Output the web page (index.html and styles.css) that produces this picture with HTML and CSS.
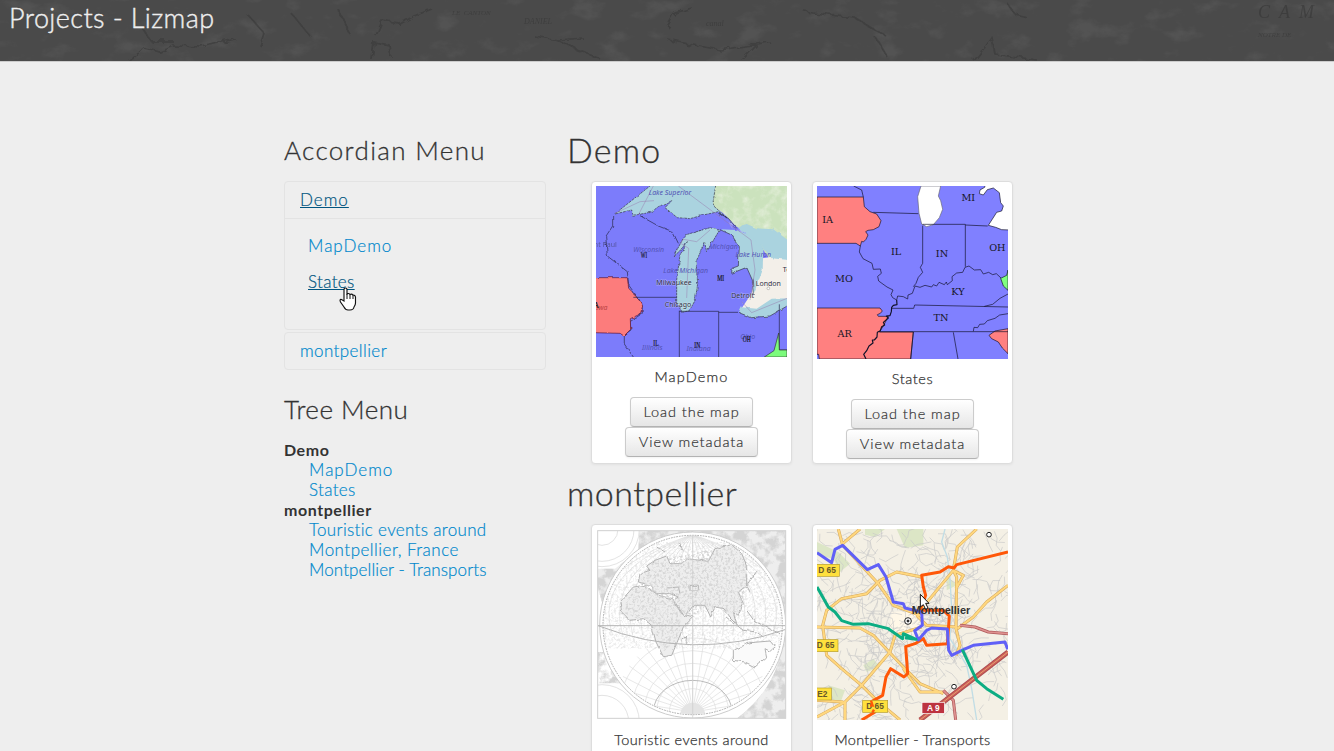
FILE: index.html
```html
<!DOCTYPE html>
<html lang="en">
<head>
<meta charset="utf-8">
<title>Projects - Lizmap</title>
<link rel="stylesheet" href="styles.css">
</head>
<body>
<header class="header">
  <svg class="header-art" viewBox="0 0 1334 61" preserveAspectRatio="none" aria-hidden="true">
    <defs>
      <filter id="relief" x="0" y="0" width="100%" height="100%">
        <feTurbulence type="fractalNoise" baseFrequency=".03 .05" numOctaves="6" seed="8"/>
        <feColorMatrix values="0 0 0 0 .16  0 0 0 0 .16  0 0 0 0 .16  4 0 0 0 -2.2"/>
      </filter>
      <filter id="rough"><feTurbulence type="fractalNoise" baseFrequency=".12" numOctaves="2"/><feDisplacementMap in="SourceGraphic" scale="8"/><feGaussianBlur stdDeviation=".7"/></filter>
    </defs>
    <rect width="1334" height="61" filter="url(#relief)" opacity=".25"/>
    <g fill="none" stroke="#3a3a3a" stroke-width="1.700" filter="url(#rough)" opacity=".65">
      <path d="M130 61l14-13 16 4 14-6 28 1 33-8M142 28l10 14 22 0M248 15l16 18-4 13M292 14l18 22M337 8l13 26M376 36l6-15 18 3 14-8 18-7M372 60l2-18 15 3 2 12M534 36l24 4 25-2M556 40l20 9 24 10M667 27l8-14 17-5M805 12l24 3 26 3 20 12 10 5M668 40l52 10 50-8M760 42l-18 18M876 38l12 20M974 61l18-23 3 16 42 6M1008 4l8 11 12 3"/>
    </g>
    <g class="header-letters"><text x="1258" y="18" letter-spacing="9" font-size="18">CAM</text><text x="452" y="15" font-size="7">LE&#160; CANTON</text><text x="524" y="24" font-size="8">DANIEL</text><text x="706" y="26" font-size="8">canal</text><text x="1258" y="37" font-size="7">NOTRE DE</text></g>
  </svg>
  <h1 class="site-title">Projects - Lizmap</h1>
</header>
<main class="content">
  <aside class="sidebar">
    <h3 class="menu-title accordion-title">Accordian Menu</h3>
    <section class="group">
      <a class="group-heading active short">Demo</a>
      <div class="group-body">
        <a class="short">MapDemo</a>
        <a class="active states-link">States<svg class="hand" width="18" height="24" viewBox="0 0 18 24" aria-hidden="true"><path d="M5 14V2.5Q5 1 6.5 1T8 2.5V7q2-1.3 3 .5 2-.9 3 .8 2-.6 2.5 1.7V16q0 2-1.5 4-.5 3-4 3H9q-2.500 0-4-3L1.500 15q-1.300-3 1-2.500Z" fill="#fff" stroke="#111" stroke-width="1.150"/><path d="M8 7v5m3-4.500V12m3-3.500V12" stroke="#111"/></svg></a>
      </div>
    </section>
    <section class="group"><a class="group-heading">montpellier</a></section>
    <h3 class="menu-title tree-title">Tree Menu</h3>
    <dl class="tree">
      <dt>Demo</dt>
      <dd><a class="short">MapDemo</a></dd>
      <dd><a>States</a></dd>
      <dt>montpellier</dt>
      <dd><a>Touristic events around<br><span class="france">Montpellier, France</span></a></dd>
      <dd><a class="long">Montpellier - Transports</a></dd>
    </dl>
  </aside>
  <div class="projects">
    <h2 class="repo-title wide">Demo</h2>
    <div class="cards">
      <article class="card">
        <svg class="thumb" viewBox="18 18 573 513" style="height:171px">
          <defs><filter id="coast" x="-5%" y="-5%" width="110%" height="110%"><feTurbulence type="fractalNoise" baseFrequency=".05" numOctaves="2" seed="3"/><feDisplacementMap in="SourceGraphic" scale="9" xChannelSelector="R" yChannelSelector="G"/></filter>
          <filter id="forest" x="0" y="0" width="100%" height="100%"><feTurbulence type="fractalNoise" baseFrequency=".035" numOctaves="4" seed="5"/><feColorMatrix values="0 0 0 0 .94  0 0 0 0 .95  0 0 0 0 .88  1.800 0 0 0 -.8"/><feComposite in2="SourceGraphic" operator="in"/></filter></defs>
          <rect x="18" y="18" width="573" height="513" fill="#7c7cfb"/>
          <path d="M260 18H591V245L545 248 520 210 498 172 440 140 400 100 370 80Z" fill="#cbe2bd"/>
          <path d="M370 18H591V170H440L400 100Z" filter="url(#forest)" opacity=".7"/>
          <path d="M515 235L591 225V370L530 380 480 395 455 385 485 340 492 300Z" fill="#f3efe9"/>
          <g filter="url(#coast)">
            <path d="M74 102L190 10H378L368 75 412 115 385 95 340 105 300 116 262 113 225 83 245 62 205 80 183 97 130 106 125 90Z" fill="#aad3df" stroke="#334" stroke-width="2" stroke-dasharray="8 3"/>
            <path d="M250 230L285 165 330 152 360 143 388 151 350 215 344 188 318 245 323 310 316 360 298 392 277 397 260 370 260 300 270 225 292 185 268 214Z" fill="#aad3df" stroke="#334" stroke-width="2" stroke-dasharray="7 2"/>
            <path d="M388 148L440 150 500 175 520 205 518 270 490 345 487 300 470 262 425 280 426 265 445 258 448 200 425 165Z" fill="#aad3df"/>
            <path d="M388 148L425 165 448 200 445 258 426 265 425 280 470 262 487 300 490 345" fill="none" stroke="#334" stroke-width="2"/>
            <path d="M445 145L465 130 500 145 550 148 600 185V240L545 235 515 198 480 170Z" fill="#aad3df"/>
            <path d="M444 397L460 362 453 382 500 386 545 356 600 355V373L540 408 485 413Z" fill="#aad3df"/>
            <path d="M444 397L485 413 540 408 600 373" fill="none" stroke="#334" stroke-width="2"/>
          </g>
          <g filter="url(#coast)" fill="none" stroke="#252545" stroke-width="2">
            <path d="M68 108V138L47 170 52 228 112 275 116 315 155 370 157 400 120 425 123 450 103 465V492L130 531M150 107L205 138 248 155 265 190M388 100L415 115 440 145"/>
          </g>
          <path d="M10 293H112L116 325 140 348 158 378 151 402 121 416 122 448 102 468 90 460 10 458Z" fill="#fc7b7b" stroke="#513" stroke-width="2" filter="url(#coast)"/>
          <path d="M130 352H260M268 392V531M268 394H386V531M386 397H444M568 373V510H591" fill="none" stroke="#222244" stroke-width="2"/>
          <path d="M523 531L552 512 566 459 568 510H591V531Z" fill="#7cfb7c" stroke="#333" stroke-width="2"/>
          <path d="M75 100L150 65 192 62M265 18L483 180 495 270 480 360M145 105L190 18M290 354L296 205 272 190 280 178 320 185 360 150M455 365L485 398 591 355" fill="none" stroke="#9877ac" stroke-width="2.500" opacity=".55"/>
          <g class="map1-place"><text x="240" y="46">Lake Superior</text><text x="176" y="215">Wisconsin</text><text x="400" y="207">Michigan</text><text x="490" y="232">Lake Huron</text><text x="287" y="278">Lake Michigan</text><text x="187" y="510">Illinois</text><text x="326" y="512">Indiana</text><text x="473" y="477">Ohio</text><text x="30" y="390" fill="#b44">Iowa</text></g>
          <g class="map1-city"><text x="46" y="201" class="faint">nt Paul</text><text x="252" y="314">Milwaukee</text><text x="264" y="381">Chicago</text><text x="458" y="355">Detroit</text><text x="535" y="317">London</text><text x="590" y="277">To</text></g><circle cx="535" cy="325" r="4" fill="#fff" stroke="#555"/>
          <g class="map1-state"><text x="162" y="233" textLength="19" lengthAdjust="spacingAndGlyphs">WI</text><text x="392" y="303" textLength="21" lengthAdjust="spacingAndGlyphs">MI</text><text x="198" y="497" textLength="16" lengthAdjust="spacingAndGlyphs">IL</text><text x="322" y="504" textLength="18" lengthAdjust="spacingAndGlyphs">IN</text><text x="470" y="485" textLength="24" lengthAdjust="spacingAndGlyphs">OH</text><text x="19" y="383">A</text></g>
        </svg>
        <p class="card-title wide">MapDemo</p>
        <a class="btn load">Load the map</a><a class="btn meta">View metadata</a>
      </article>
      <article class="card">
        <svg class="thumb" viewBox="21 18 573 519" style="height:173px">
          <rect x="21" y="18" width="573" height="519" fill="#8080ff"/>
          <g stroke="#111129" stroke-width="2" stroke-linejoin="round">
            <path d="M333 18L323 50 327 100 335 132 350 140 370 134 388 113 398 88 392 62 385 48 392 18Z" fill="#fff" stroke="#667"/>
            <path d="M526 12L524 22 510 30 508 41 520 45 532 29 550 24 568 38 572 68 580 78 575 93 560 97 553 108 535 136 557 142 575 149 602 150V12Z" fill="#fff"/>
            <path d="M21 51H160L163 80 180 95 200 102 213 122 207 140 190 149 174 151 167 155 174 165 168 178 160 186 155 184 151 198 138 190H21Z" fill="#ff8080"/>
            <path d="M21 384H210L217 393 211 400 202 404 205 409H235L220 438 208 456H310L302 537H28L26 523 21 523Z" fill="#ff8080"/>
            <path d="M594 446L555 453 537 466 545 476 565 486 577 504 594 521Z" fill="#ff8080"/>
            <path d="M594 270L590 286 572 295 580 318 594 331Z" fill="#80ff80"/>
            <g fill="none">
              <path d="M131 18L155 30 160 51M190 97L325 101M338 137V250L331 262 338 277 325 292 318 310 310 320M338 133H466V260M466 135 533 138"/>
              <path d="M151 198L148 216 159 236 186 250 190 268 211 267 214 280 203 289 206 303 231 321 249 330 243 344 248 353 260 360 263 348 280 350 293 357 294 345 307 340 315 318 330 322 345 316 365 321 370 314 380 318 387 307 403 314 409 306 412 314 427 302 426 290 440 279 458 277 465 262 477 258 493 270 512 269 520 282 536 277 548 284 559 281 573 294"/>
              <path d="M260 360L261 374 250 376 245 382 244 395 240 407 229 408 235 414 220 427 224 435 215 440 211 452 202 457 201 471 193 480 187 480 189 489 177 498 170 512 161 523 168 537" stroke-width="3.500"/>
              <path d="M245 385H311L314 375 594 381M208 455H594M310 456L302 537M430 457L444 537M523 379L548 373 570 355 594 342M490 454L492 442 503 443 509 433 523 432 532 422 555 415 569 405 594 401"/>
            </g>
          </g>
          <g class="map2-state"><text x="53" y="130">IA</text><text x="258" y="225">IL</text><text x="396" y="232">IN</text><text x="475" y="62">MI</text><text x="562" y="214">OH</text><text x="102" y="305">MO</text><text x="444" y="345">KY</text><text x="393" y="424">TN</text><text x="104" y="470">AR</text></g>
        </svg>
        <p class="card-title">States</p>
        <a class="btn load">Load the map</a><a class="btn meta">View metadata</a>
      </article>
    </div>
    <h2 class="repo-title">montpellier</h2>
    <div class="cards">
      <article class="card">
        <svg class="thumb" viewBox="18 21 573 573" style="height:191px">
          <defs>
            <filter id="etch" x="0" y="0" width="100%" height="100%"><feTurbulence type="fractalNoise" baseFrequency=".14" numOctaves="3" seed="4"/><feColorMatrix values="0 0 0 0 .62  0 0 0 0 .62  0 0 0 0 .62  4 0 0 0 -1.8"/><feComposite in2="SourceGraphic" operator="in"/></filter>
            <filter id="engrave" x="0" y="0" width="100%" height="100%"><feTurbulence type="fractalNoise" baseFrequency=".03" numOctaves="5" seed="12"/><feColorMatrix values="0 0 0 0 .66  0 0 0 0 .66  0 0 0 0 .66  5 0 0 0 -2"/><feComposite in2="SourceGraphic" operator="in"/></filter>
            <clipPath id="frame"><rect x="24" y="27" width="562" height="561"/></clipPath>
            <clipPath id="disc"><circle cx="308" cy="309" r="268"/></clipPath>
          </defs>
          <rect x="18" y="21" width="573" height="573" fill="#fff"/>
          <g clip-path="url(#frame)">
            <path d="M148 24H588V590H440Q585 480 580 309 560 80 308 38 110 55 40 255L24 200V140H75L145 85Z" fill="#eee"/>
            <path d="M148 24H588V590H440Q585 480 580 309 560 80 308 38 110 55 40 255L24 200V140H75L145 85Z" filter="url(#engrave)"/>
            <path d="M24 390L42 390 95 484H24Z" filter="url(#engrave)"/>
            <g fill="#fff" stroke="#d5d5d5" stroke-width="2"><circle cx="36" cy="22" r="112"/><circle cx="36" cy="22" r="96"/><circle cx="36" cy="22" r="48"/><circle cx="36" cy="600" r="112"/><circle cx="36" cy="600" r="80"/></g>
            <circle cx="308" cy="309" r="279" fill="#fff" stroke="#ccc" stroke-width="3"/>
            <circle cx="308" cy="309" r="269" fill="#fff" stroke="#aaa" stroke-width="3" stroke-dasharray="5 3"/>
            <g clip-path="url(#disc)">
              <g id="graticule" fill="none" stroke="#dcdcdc" stroke-width="2"></g>
              <path d="M190 570A118 95 0 0 1 426 570" fill="none" stroke-width="3" stroke="#bbb"/>
              <circle cx="308" cy="580" r="38" fill="#e4e4e4"/>
              <rect x="35" y="60" width="540" height="320" filter="url(#etch)" opacity=".4"/>
              <g filter="url(#coast)" fill="#eee" stroke="#b2b2b2" stroke-width="3">
                <path d="M130 195L165 190 205 220 245 230 275 275 310 285 280 315 268 345 245 400 220 404 198 360 185 310 160 290 120 295 95 270 90 240Z"/>
                <path d="M145 180L150 155 180 145 170 132 195 115 230 102 240 125 275 125 290 110 355 118 375 80 425 68 455 95 470 130 470 190 445 210 460 245 445 280 430 270 440 305 420 285 402 260 375 255 362 285 345 250 310 250 285 285 250 235 265 225 240 215 200 215 180 190Z"/>
                <path d="M430 385L480 362 540 357 555 375 540 388 525 380 530 405 495 435 465 420 430 415Z" fill="#fafafa"/><path d="M408 285L460 325 500 330 520 345M470 265L495 300 570 335M500 145L470 190 480 210M200 75L225 90M265 65L280 85M275 355L290 340 287 365M230 198L265 195 270 215M300 190H325V207H300Z" fill="none"/>
              </g>
              <path d="M130 195L165 190 205 220 245 230 275 275 268 345 220 390 185 310 95 270ZM145 180L190 118 375 80 425 68 470 130 470 190 445 280 375 260 285 285 200 215Z" filter="url(#etch)" opacity=".7"/>
            </g>
            <path d="M24 311H588M24 311Q308 420 588 322" fill="none" stroke="#b5b5b5" stroke-width="3"/>
            <path d="M308 40V590" stroke="#ccc" stroke-width="2"/>
          </g>
          <rect x="23" y="26" width="564" height="563" fill="none" stroke="#d0d0d0" stroke-width="3"/>
        </svg>
        <p class="card-title long">Touristic events around<br>Montpellier, France</p>
        <a class="btn load">Load the map</a><a class="btn meta">View metadata</a>
      </article>
      <article class="card">
        <svg class="thumb" viewBox="21 21 573 573" style="height:191px">
          <rect x="21" y="21" width="573" height="573" fill="#f4f0e5"/>
          <g fill="#dce6c6"><path d="M21 60L85 90 120 125 90 150 70 110 21 100ZM165 21H225L195 45 165 38ZM260 21H340V70L285 78ZM410 160L440 190 410 205ZM55 490L105 505 90 545 60 540ZM160 430L190 410 210 435 170 450Z"/></g>
          <path d="M245 270L335 265 340 320 280 350 240 320Z" fill="#fff8e8"/>
          <g id="streets" fill="none" stroke="#c9c9c9" stroke-width="2"></g>
          <path d="M405 21L395 60 412 105 420 170 425 260 420 350 470 430 485 500 500 594" fill="none" stroke="#c1dde5" stroke-width="4"/>
          <g fill="none" stroke-linejoin="round">
            <defs><path id="roadpaths" d="M21 315L150 318 190 340 275 430 330 485 400 515M85 21L98 70 205 185 250 250 330 280M98 65L150 21M335 165L260 150 210 175 170 215 95 230 50 265 38 310 50 400 95 440 155 490 200 535 270 594M155 490L240 390 255 340 335 315M105 540L21 585M155 490L105 540V594M335 260L430 145 440 165 438 320 450 370 438 400M430 145L442 75 500 21M442 320L490 285 530 240 594 190M430 145L460 160 438 200M320 280L350 310 440 315M21 535L100 540M280 440L330 510 400 510"/></defs>
            <use href="#roadpaths" stroke="#d5a85c" stroke-width="9"/><use href="#roadpaths" stroke="#ffd77e" stroke-width="6"/>
            <path d="M400 505L430 535 437 594M450 310L495 315 535 330 594 335" stroke="#ad5758" stroke-width="9"/><path d="M400 505L430 535 437 594M450 310L495 315 535 330 594 335" stroke="#df9290" stroke-width="5"/><path d="M330 594L594 390" stroke="#ad4c4d" stroke-width="15"/><path d="M330 594L594 390" stroke="#cb5f5c" stroke-width="10"/><path d="M330 594L594 390" stroke="#f5c374" stroke-width="2"/>
            <g stroke-width="9">
              <path d="M594 90L440 128 432 138 415 134 390 150 335 160 340 195 347 220 330 265 400 265 418 282 412 365 350 370 340 350 315 365 287 374 293 455 282 465 242 440 228 465 218 520 182 540 195 570 155 594" stroke="#ff5708"/>
              <path d="M21 92L65 122 75 82 98 70 172 143 205 128 228 165 250 240 280 245 285 258 335 270 337 310 314 326 325 354 350 325 365 318 412 321 416 385 425 400 460 383 490 370 585 360 593 382" stroke="#6060f7"/>
              <path d="M21 195L55 255 75 270 95 296 130 307 175 305 235 320 278 350 280 335 318 352 285 347M457 383L500 475 530 500 580 532" stroke="#0cad83"/>
            </g>
          </g>
          <g class="road-tag"><rect x="17" y="127" width="71" height="36"/><text x="51" y="153">D 65</text><rect x="17" y="353" width="67" height="36"/><text x="47" y="379">D 65</text><rect x="17" y="498" width="47" height="36"/><text x="37" y="524">E2</text><rect x="158" y="535" width="75" height="36"/><text x="195" y="561">D 65</text></g>
          <path d="M183 536L188 551 180 551M192 563L187 572" fill="none" stroke="#ff5708" stroke-width="7"/>
          <rect x="336" y="541" width="67" height="33" fill="#bd3340" stroke="#fff" stroke-width="2"/><text x="370" y="566" class="highway">A 9</text>
          <g fill="#fff" stroke="#222" stroke-width="3"><circle cx="537" cy="38" r="7"/><circle cx="432" cy="494" r="7"/><circle cx="294" cy="297" r="10"/><circle cx="294" cy="297" r="3" fill="#111"/></g>
          <text x="393" y="275" class="city" textLength="176" lengthAdjust="spacingAndGlyphs">Montpellier</text>
          <path d="M331 217V255L340 248 347 262 354 258 347 244H357Z" fill="#fff" stroke="#111" stroke-width="3"/>
        </svg>
        <p class="card-title transports">Montpellier - Transports</p>
        <a class="btn load">Load the map</a><a class="btn meta">View metadata</a>
      </article>
    </div>
  </div>
</main>
<script src="maps.js"></script>
</body>
</html>
```
FILE: styles.css
```css
* { box-sizing: border-box; }
html, body { height: 100%; overflow: hidden; }
body { margin: 0; background: #eee; color: #333; font: 300 17px/20px Lato, "Open Sans", sans-serif; }
h1, h2, h3, p, dl, dd { margin: 0; font-weight: 300; }
a { color: #0088cc; -webkit-text-stroke: .2px currentColor; }
.header { position: relative; height: 62px; background: #4a4a4a; border-bottom: 1px solid #ccc; overflow: hidden; }
.header-art { position: absolute; inset: 0; width: 100%; height: 61px; }
.header-letters { font: italic 22px "Liberation Serif", serif; fill: #343434; opacity: .55; }
.site-title { position: relative; padding-left: 9px; color: #eee; font-size: 27px; line-height: 36px; letter-spacing: .4px; -webkit-text-stroke: .4px currentColor; }
.content { display: flex; gap: 21px; height: calc(100% - 62px); padding: 69px 0 0 284px; overflow: hidden; }
.sidebar { width: 262px; flex: none; }
.menu-title { padding-bottom: 2px; font-size: 26px; line-height: 38px; -webkit-text-stroke: .3px currentColor; }
.accordion-title { margin-bottom: 10px; letter-spacing: 1.35px; }
.tree-title { margin: 20px 0 10px; letter-spacing: .5px; }
.group { border: 1px solid #e3e3e3; border-radius: 4px; }
.group + .group { margin-top: 2px; }
.group-heading { display: block; height: 36px; padding: 8px 15px; letter-spacing: .4px; }
.active { color: #005580; text-decoration: underline; }
.group-body { display: flex; flex-direction: column; align-items: flex-start; gap: 16px; height: 111px; padding: 17px 23px; border-top: 1px solid #e3e3e3; letter-spacing: .35px; }
.short { letter-spacing: 1px; }
.states-link { position: relative; }
.hand { position: absolute; left: 31px; top: 15px; }
.tree dt { font-size: 16px; font-weight: 700; letter-spacing: .55px; }
.tree dd { padding-left: 25px; letter-spacing: .33px; }
.tree .long { letter-spacing: .1px; }
.tree .france { letter-spacing: .48px; }
.projects { width: 446px; flex: none; }
.repo-title { padding-bottom: 2px; font-size: 34px; line-height: 38px; margin-bottom: 10px; letter-spacing: .45px; -webkit-text-stroke: .3px currentColor; }
.repo-title.wide { letter-spacing: 1.2px; }
.cards { display: flex; gap: 20px; padding-left: 24px; margin-bottom: 10px; }
.card { display: flex; flex-direction: column; align-items: center; width: 201px; padding: 4px; background: #fff; border: 1px solid #ddd; border-radius: 4px; box-shadow: 0 1px 3px rgba(0,0,0,.055); }
.thumb { display: block; width: 191px; flex: none; overflow: hidden; }
.card-title { margin: 10px 0; font-size: 14.5px; line-height: 20px; text-align: center; letter-spacing: .6px; -webkit-text-stroke: .25px currentColor; }
.card-title.wide { letter-spacing: 1.15px; }
.card-title.long { letter-spacing: .42px; }
.card-title.transports { letter-spacing: .27px; }
.btn { display: block; height: 30px; padding: 4px 0; color: #333; font-size: 14.5px; text-align: center; letter-spacing: .95px; background: linear-gradient(#fff, #e6e6e6); border: 1px solid #ccc; border-bottom-color: #b3b3b3; border-radius: 4px; box-shadow: inset 0 1px 0 rgba(255,255,255,.2), 0 1px 2px rgba(0,0,0,.05); }
.load { width: 123px; }
.meta { width: 133px; }
.map1-place { font: italic 400 21px "Noto Sans", sans-serif; text-anchor: middle; fill: #5353b5; }
.map1-city { font: 400 21px "Noto Sans", sans-serif; text-anchor: middle; fill: #303044; stroke: rgba(255,255,255,.35); stroke-width: 3px; paint-order: stroke; }
.faint { opacity: .5; stroke: none; }
.map1-state { font: 400 23px "Liberation Serif", serif; text-anchor: middle; fill: #111; stroke: #111; stroke-width: .5px; }
.map2-state { font: 400 29px "DejaVu Serif", serif; text-anchor: middle; fill: #161625; }
.road-tag { font: 700 25px "Liberation Sans", sans-serif; text-anchor: middle; }
.road-tag rect { fill: #ffe03d; stroke: #b59d2d; stroke-width: 2px; }
.road-tag text { fill: #66572a; }
.highway { font: 700 25px "Liberation Sans", sans-serif; text-anchor: middle; fill: #fff; }
.city { font: 700 31px "Liberation Sans", sans-serif; text-anchor: middle; fill: #333; }
```
FILE: maps.js
```js
// Draws the repeated line work of the thumbnails.
const NS = "http://www.w3.org/2000/svg";
function line(parent, d) {
  const p = document.createElementNS(NS, "path");
  p.setAttribute("d", d);
  parent.appendChild(p);
}
const grid = document.getElementById("graticule");
for (let r = 70; r < 240; r += 38) line(grid, `M${308 - r} 570A${r} ${r} 0 0 1 ${308 + r} 570`);
for (let i = -9; i < 10; i++) {
  const a = i * Math.PI / 20;
  line(grid, `M308 570L${308 + 235 * Math.sin(a)} ${570 - 235 * Math.cos(a)}`);
  line(grid, `M308 38Q${308 + i * 38} 150 ${308 + i * 30} 340`);
}
let seed = 41;
const rnd = () => (seed = seed * 16807 % 2147483647) / 2147483647;
const streets = document.getElementById("streets");
for (let i = 0; i < 420; i++) {
  const spread = i < 140 ? 140 : 300;
  let x = 290 + (rnd() - .5) * 2 * spread, y = 320 + (rnd() - .5) * 2 * spread;
  let a = rnd() * 6.28, d = `M${x} ${y}`;
  for (let j = 0; j < 3; j++) {
    x += Math.cos(a) * 22; y += Math.sin(a) * 22;
    d += `L${x} ${y}`;
    a += (rnd() - .5) * 2.4;
  }
  line(streets, d);
}
```
